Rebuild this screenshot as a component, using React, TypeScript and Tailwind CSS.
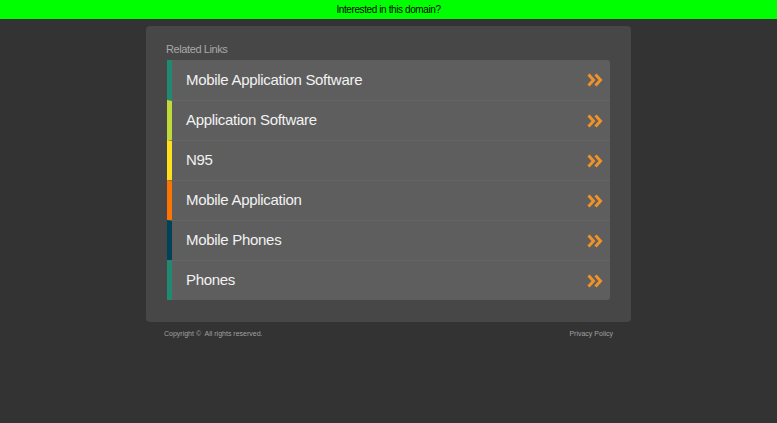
const links = [
    { label: 'Mobile Application Software', color: 'border-l-[#1f8a70]' },
    { label: 'Application Software', color: 'border-l-[#bedb39]' },
    { label: 'N95', color: 'border-l-[#ffe11a]' },
    { label: 'Mobile Application', color: 'border-l-[#fd7400]' },
    { label: 'Mobile Phones', color: 'border-l-[#004358]' },
    { label: 'Phones', color: 'border-l-[#1f8a70]' },
]

const Arrows = () => (
    <svg width="16" height="14" viewBox="0 0 16 14" fill="none" className="shrink-0">
        <path d="M1.5 1.5 L6.5 7 L1.5 12.5" stroke="#f0922a" strokeWidth="3" strokeLinejoin="miter" />
        <path d="M8.5 1.5 L13.5 7 L8.5 12.5" stroke="#f0922a" strokeWidth="3" strokeLinejoin="miter" />
    </svg>
)

export default function App() {
    return (
        <div className="min-h-[423px] bg-[#333333] font-['Liberation_Sans',Arial,sans-serif]">
            <div className="flex h-[19px] items-center justify-center bg-[#00ff00] text-[10px] tracking-[-0.4px] text-black">
                Interested in this domain?
            </div>
            <div className="mx-auto mt-[7px] w-[485px]">
                <div className="rounded-[4px] bg-[#474747] px-[20px] pb-[22px] pt-[17px]">
                    <div className="mb-[4px] text-[11px] leading-[13px] tracking-[-0.4px] text-[#a9a9a9]">Related Links</div>
                    <div className="ml-px w-[443px] overflow-hidden rounded-r-[3px]">
                        {links.map((link, i) => (
                            <div
                                key={link.label}
                                className={`flex h-[40px] items-center justify-between border-l-[5px] bg-[#5e5e5e] pl-[14px] pr-[7px] ${link.color} ${
                                    i > 0 ? 'border-t border-t-[#656565]' : ''
                                }`}>
                                <span className="text-[15px] tracking-[-0.3px] text-[#f2f2f2]">{link.label}</span>
                                <Arrows />
                            </div>
                        ))}
                    </div>
                </div>
                <div className="flex justify-between px-[18px] pt-[7px] text-[7px] text-[#a0a0a0]">
                    <span>Copyright ©&nbsp; All rights reserved.</span>
                    <span>Privacy Policy</span>
                </div>
            </div>
        </div>
    )
}
